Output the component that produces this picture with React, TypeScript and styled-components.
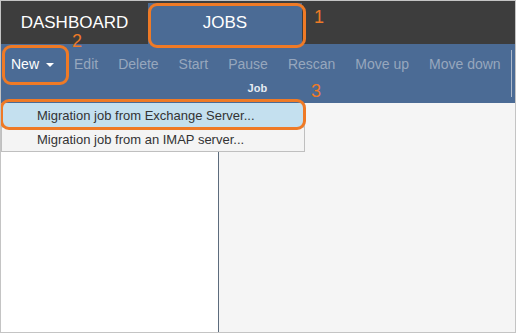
import styled, { createGlobalStyle } from "styled-components";

const GlobalStyle = createGlobalStyle`
  html, body {
    margin: 0;
    padding: 0;
    background: #ffffff;
  }
  * {
    box-sizing: border-box;
  }
`;

const Frame = styled.div`
  position: relative;
  width: 516px;
  height: 333px;
  border: 1px solid #c4c4c4;
  display: flex;
  flex-direction: column;
  font-family: "Liberation Sans", Arial, sans-serif;
  overflow: hidden;
`;

const TopBar = styled.div`
  display: flex;
  align-items: flex-end;
  height: 43px;
  background: #3d3d3d;
`;

const Tab = styled.div<{ $active?: boolean; $width: number }>`
  width: ${(p) => p.$width}px;
  height: ${(p) => (p.$active ? "41px" : "43px")};
  display: flex;
  align-items: center;
  justify-content: center;
  padding-bottom: ${(p) => (p.$active ? "2px" : "0")};
  background: ${(p) => (p.$active ? "#4b6b95" : "transparent")};
  color: #ffffff;
  font-size: 17px;
`;

const Toolbar = styled.div`
  height: 59px;
  background: #4b6b95;
  display: flex;
  align-items: stretch;
`;

const Group = styled.div`
  flex: 1;
  display: flex;
  flex-direction: column;
`;

const Buttons = styled.div`
  display: flex;
  height: 38px;
  align-items: center;
  padding-top: 1px;
`;

const ToolButton = styled.div<{ $enabled?: boolean }>`
  display: flex;
  align-items: center;
  gap: 7px;
  padding: 0 10px;
  font-size: 14px;
  color: ${(p) => (p.$enabled ? "#ffffff" : "#97a7bd")};
  white-space: nowrap;
`;

const Caret = styled.span`
  width: 0;
  height: 0;
  border-left: 4px solid transparent;
  border-right: 4px solid transparent;
  border-top: 4px solid #ffffff;
  margin-top: 2px;
`;

const GroupLabel = styled.div`
  text-align: center;
  font-size: 11px;
  font-weight: bold;
  color: #e6ebf2;
  padding-left: 3px;
`;

const Separator = styled.div`
  width: 2px;
  margin: 6px 3px 6px 0;
  background: #aebacb;
`;

const Body = styled.div`
  flex: 1;
  display: flex;
`;

const LeftPane = styled.div`
  width: 218px;
  background: #ffffff;
  border-right: 1px solid #5c6b7c;
`;

const RightPane = styled.div`
  flex: 1;
  background: #f5f5f5;
`;

const Menu = styled.div`
  position: absolute;
  left: 0;
  top: 102px;
  width: 304px;
  background: #f4f4f4;
  border: 1px solid #bfbfbf;
  border-top: none;
  display: flex;
  flex-direction: column;
`;

const MenuItem = styled.div<{ $hover?: boolean }>`
  height: ${(p) => (p.$hover ? "25px" : "23px")};
  display: flex;
  align-items: center;
  padding-left: 35px;
  font-size: 13px;
  color: #333333;
  background: ${(p) => (p.$hover ? "#c4e0ef" : "transparent")};
`;

const Callout = styled.div`
  position: absolute;
  border: 3px solid #ef7a26;
  border-radius: 9px;
  pointer-events: none;
`;

const Marker = styled.div`
  position: absolute;
  font-size: 18px;
  color: #ef7a26;
  line-height: 1;
`;

const tools = ["Edit", "Delete", "Start", "Pause", "Rescan", "Move up", "Move down"];

export default function App() {
  return (
    <>
      <GlobalStyle />
      <Frame>
        <TopBar>
          <Tab $width={147}>DASHBOARD</Tab>
          <Tab $width={154} $active>
            JOBS
          </Tab>
        </TopBar>

        <Toolbar>
          <Group>
            <Buttons>
              <ToolButton $enabled>
                New <Caret />
              </ToolButton>
              {tools.map((t) => (
                <ToolButton key={t}>{t}</ToolButton>
              ))}
            </Buttons>
            <GroupLabel>Job</GroupLabel>
          </Group>
          <Separator />
        </Toolbar>

        <Body>
          <LeftPane />
          <RightPane />
        </Body>

        <Menu>
          <MenuItem $hover>Migration job from Exchange Server...</MenuItem>
          <MenuItem>Migration job from an IMAP server...</MenuItem>
        </Menu>

        {/* annotations */}
        <Callout style={{ left: 147, top: 2, width: 158, height: 45 }} />
        <Marker style={{ left: 313, top: 7 }}>1</Marker>
        <Callout style={{ left: 1, top: 44, width: 67, height: 40 }} />
        <Marker style={{ left: 71, top: 31 }}>2</Marker>
        <Callout style={{ left: -1, top: 98, width: 306, height: 31 }} />
        <Marker style={{ left: 310, top: 81 }}>3</Marker>
      </Frame>
    </>
  );
}
